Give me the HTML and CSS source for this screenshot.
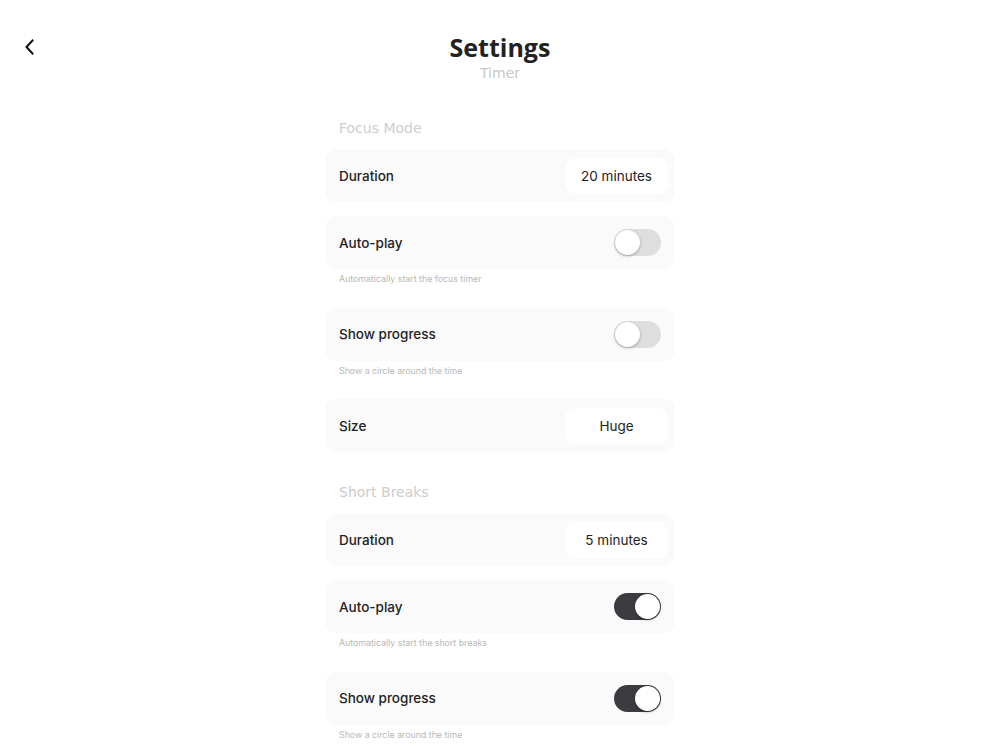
FILE: index.html
```html
<!DOCTYPE html>
<html>
<head>
<meta charset="utf-8">
<link rel="stylesheet" href="styles.css">
</head>
<body>
<div class="page">
  <header class="header">
    <button class="back" aria-label="Back">
      <svg width="12" height="16" viewBox="0 0 12 16"><path d="M8.5 1.5 L2.5 8 L8.5 14.5" fill="none" stroke="#111" stroke-width="2" stroke-linecap="square"/></svg>
    </button>
    <h1 class="title">Settings</h1>
    <div class="subtitle">Timer</div>
  </header>

  <main class="column">
    <section class="section">
      <h2 class="section-title">Focus Mode</h2>
      <div class="card"><span class="label">Duration</span><span class="value">20 minutes</span></div>
      <div class="card"><span class="label">Auto-play</span><span class="toggle"><span class="knob"></span></span></div>
      <p class="desc">Automatically start the focus timer</p>
      <div class="card"><span class="label">Show progress</span><span class="toggle"><span class="knob"></span></span></div>
      <p class="desc">Show a circle around the time</p>
      <div class="card"><span class="label">Size</span><span class="value">Huge</span></div>
    </section>

    <section class="section">
      <h2 class="section-title">Short Breaks</h2>
      <div class="card"><span class="label">Duration</span><span class="value">5 minutes</span></div>
      <div class="card"><span class="label">Auto-play</span><span class="toggle on"><span class="knob"></span></span></div>
      <p class="desc">Automatically start the short breaks</p>
      <div class="card"><span class="label">Show progress</span><span class="toggle on"><span class="knob"></span></span></div>
      <p class="desc">Show a circle around the time</p>
    </section>
  </main>
</div>
</body>
</html>
```
FILE: styles.css
```css
* { box-sizing: border-box; }
html, body { margin: 0; padding: 0; background: #fff; }
body { font-family: Inter, "Noto Sans", sans-serif; color: #222; }

.page { width: 1000px; height: 750px; overflow: hidden; }

.header {
  position: relative;
  padding-top: 31px;
  text-align: center;
}
.back {
  position: absolute;
  left: 24px;
  top: 39px;
  width: 14px;
  height: 18px;
  padding: 0;
  border: 0;
  background: none;
  display: flex;
}
.title {
  margin: 0;
  font-family: "Open Sans", sans-serif;
  font-weight: 700;
  font-size: 25px;
  line-height: 33px;
  color: #222;
}
.subtitle {
  font-family: "DejaVu Sans", sans-serif;
  font-size: 14px;
  line-height: 20px;
  color: #c8c8c8;
  margin-top: -1px;
}

.column {
  width: 350px;
  margin: 35px auto 0;
}
.section + .section { margin-top: 30px; }

.section-title {
  margin: 0 0 11px 14px;
  font-family: "DejaVu Sans", sans-serif;
  font-weight: 500;
  font-size: 14px;
  line-height: 20px;
  color: #cdcdcd;
}

.card {
  height: 53px;
  background: #fafafa;
  border-radius: 12px;
  display: flex;
  align-items: center;
  justify-content: space-between;
  padding: 0 14px;
}
.card + .card { margin-top: 14px; }
.desc + .card { margin-top: 21.5px; }

.label {
  font-size: 13.5px;
  font-weight: 500;
  color: #222;
}
.value {
  width: 103px;
  height: 36px;
  margin-right: -7px;
  background: #fff;
  border-radius: 10px;
  display: flex;
  align-items: center;
  justify-content: center;
  font-size: 13.5px;
  font-weight: 400;
  color: #222;
}

.toggle {
  width: 47px;
  height: 27px;
  border-radius: 14px;
  background: #dedede;
  position: relative;
  display: block;
}
.toggle .knob {
  position: absolute;
  top: 1px;
  left: 1px;
  width: 25px;
  height: 25px;
  border-radius: 50%;
  background: #fff;
  box-shadow: 0 1px 3px rgba(0,0,0,0.3);
}
.toggle.on { background: #3b3b40; }
.toggle.on .knob { left: 21px; }

.desc {
  margin: 3px 0 0 14px;
  font-size: 8.8px;
  line-height: 14px;
  color: #b8b8b8;
}
```
